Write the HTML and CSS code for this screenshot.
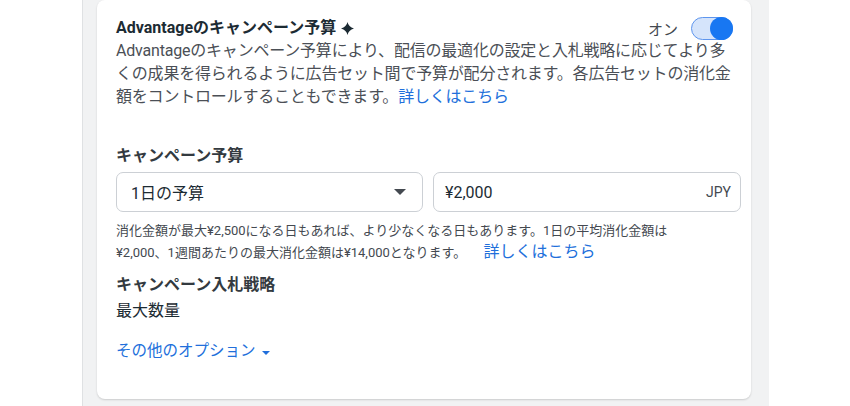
FILE: index.html
```html
<!DOCTYPE html>
<html lang="ja">
<head>
<meta charset="utf-8">
<link rel="stylesheet" href="styles.css">
</head>
<body>
<div class="panel">
  <div class="card">
    <div class="header">
      <div class="title">Advantageのキャンペーン予算 <svg class="spark" viewBox="0 0 12 12" width="13" height="13"><path d="M6 0 Q6.9 4.6 12 6 Q6.9 7.4 6 12 Q5.1 7.4 0 6 Q5.1 4.6 6 0 Z" fill="#1c2b33"/></svg></div>
      <div class="toggle-wrap">
        <span class="toggle-label">オン</span>
        <span class="toggle"><span class="knob"></span></span>
      </div>
    </div>
    <p class="desc">Advantageのキャンペーン予算により、配信の最適化の設定と入札戦略に応じてより多くの成果を得られるように広告セット間で予算が配分されます。各広告セットの消化金額をコントロールすることもできます。<a class="link" href="#">詳しくはこちら</a></p>

    <div class="section budget">
      <div class="label">キャンペーン予算</div>
      <div class="fields">
        <div class="select">
          <span>1日の予算</span>
          <span class="caret"></span>
        </div>
        <div class="input">
          <span>¥2,000</span>
          <span class="currency">JPY</span>
        </div>
      </div>
      <p class="help">消化金額が最大¥2,500になる日もあれば、より少なくなる日もあります。1日の平均消化金額は¥2,000、1週間あたりの最大消化金額は¥14,000となります。 <a class="link big" href="#">詳しくはこちら</a></p>
    </div>

    <div class="section bid">
      <div class="label">キャンペーン入札戦略</div>
      <div class="value">最大数量</div>
    </div>

    <a class="more" href="#">その他のオプション <span class="small-caret"></span></a>
  </div>
</div>
</body>
</html>
```

FILE: styles.css
```css
* { box-sizing: border-box; }
html, body { margin: 0; padding: 0; background: #ffffff; }
body {
  font-family: Roboto, "Noto Sans CJK JP", sans-serif;
  color: #1c2b33;
  overflow: hidden;
}
.panel {
  margin-left: 82px;
  width: 687px;
  height: 406px;
  background: #f1f2f3;
  border-left: 1px solid #dfe1e3;
  padding: 0 18px 0 14px;
}
.card {
  background: #ffffff;
  border-radius: 8px;
  box-shadow: 0 1px 2px rgba(0, 0, 0, 0.16);
  height: 399px;
  padding: 17px 10px 0 19px;
}
.header {
  display: flex;
  justify-content: space-between;
  align-items: center;
  height: 22px;
  padding-right: 8px;
}
.title {
  font-size: 16px;
  font-weight: 700;
  color: #1c2b33;
  line-height: 22px;
  display: flex;
  align-items: center;
  gap: 5px;
}
.spark { margin-top: 1px; }
.toggle-wrap {
  display: flex;
  align-items: center;
  gap: 13px;
}
.toggle-label {
  font-size: 15px;
  color: #444950;
}
.toggle {
  width: 42px;
  height: 23px;
  border-radius: 12px;
  background: #d5e4fb;
  border: 1px solid #5d95ee;
  display: flex;
  justify-content: flex-end;
  align-items: center;
}
.knob {
  width: 23px;
  height: 23px;
  border-radius: 50%;
  background: #1877f2;
  margin-right: -1px;
}
.desc {
  margin: 0;
  font-size: 16px;
  line-height: 23px;
  letter-spacing: -0.2px;
  color: #4b4f56;
  padding-right: 4px;
}
.link {
  color: #216fdb;
  text-decoration: none;
}
.section.budget { margin-top: 36px; }
.label {
  font-size: 16px;
  font-weight: 700;
  line-height: 23px;
  color: #333a40;
}
.fields {
  display: flex;
  gap: 10px;
  margin-top: 5px;
}
.select, .input {
  height: 40px;
  border: 1px solid #ccd0d5;
  border-radius: 7px;
  display: flex;
  align-items: center;
  justify-content: space-between;
  font-size: 16px;
  color: #1c2b33;
}
.select {
  width: 307px;
  padding: 0 16px 0 14px;
}
.input {
  flex: 1;
  padding: 0 9px 0 11px;
}
.caret {
  width: 0;
  height: 0;
  border-left: 6px solid transparent;
  border-right: 6px solid transparent;
  border-top: 6px solid #444950;
}
.currency {
  font-size: 14px;
  color: #444950;
}
.help {
  margin: 8px 0 0;
  font-size: 13px;
  line-height: 21px;
  color: #444950;
  max-width: 590px;
}
.link.big {
  font-size: 16px;
  margin-left: 14px;
}
.section.bid { margin-top: 10px; }
.value {
  font-size: 16px;
  line-height: 23px;
  margin-top: 3px;
  color: #1c2b33;
}
.more {
  display: inline-flex;
  align-items: center;
  gap: 6px;
  margin-top: 18px;
  font-size: 15.5px;
  line-height: 23px;
  color: #216fdb;
  text-decoration: none;
}
.small-caret {
  width: 0;
  height: 0;
  border-left: 4px solid transparent;
  border-right: 4px solid transparent;
  border-top: 4px solid #216fdb;
  margin-top: 2px;
}
```
